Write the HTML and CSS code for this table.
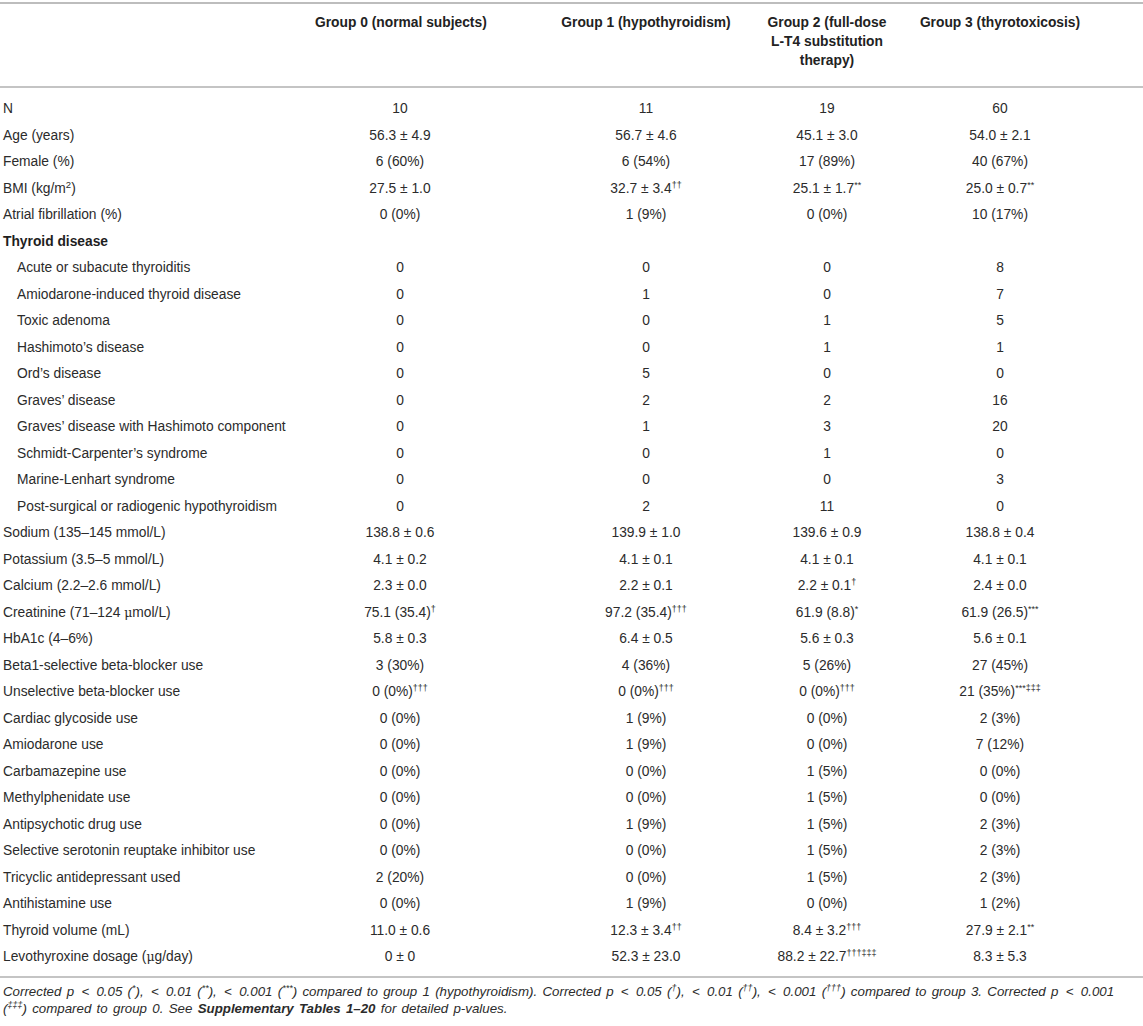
FILE: index.html
```html
<!DOCTYPE html>
<html>
<head>
<meta charset="utf-8">
<link rel="stylesheet" href="styles.css">
</head>
<body>
<div class="wrap">
<table class="tbl">
<colgroup>
<col class="c0"><col class="c1"><col class="c2"><col class="c3"><col class="c4">
</colgroup>
<thead>
<tr>
<th class="lab"></th>
<th class="g0"><span class="hd">Group 0 (normal subjects)</span></th>
<th class="g1"><span class="hd">Group 1 (hypothyroidism)</span></th>
<th class="g2"><span class="hd hd-narrow">Group 2 (full-dose L-T4 substitution therapy)</span></th>
<th class="g3"><span class="hd">Group 3 (thyrotoxicosis)</span></th>
</tr>
</thead>
<tbody>
<tr class="first"><td class="lab">N</td><td class="g0">10</td><td class="g1">11</td><td class="g2">19</td><td class="g3">60</td></tr>
<tr><td class="lab">Age (years)</td><td class="g0">56.3 ± 4.9</td><td class="g1">56.7 ± 4.6</td><td class="g2">45.1 ± 3.0</td><td class="g3">54.0 ± 2.1</td></tr>
<tr><td class="lab">Female (%)</td><td class="g0">6 (60%)</td><td class="g1">6 (54%)</td><td class="g2">17 (89%)</td><td class="g3">40 (67%)</td></tr>
<tr><td class="lab">BMI (kg/m<sup class="sq">2</sup>)</td><td class="g0">27.5 ± 1.0</td><td class="g1">32.7 ± 3.4<sup>††</sup></td><td class="g2">25.1 ± 1.7<sup>**</sup></td><td class="g3">25.0 ± 0.7<sup>**</sup></td></tr>
<tr><td class="lab">Atrial fibrillation (%)</td><td class="g0">0 (0%)</td><td class="g1">1 (9%)</td><td class="g2">0 (0%)</td><td class="g3">10 (17%)</td></tr>
<tr><td class="lab sect">Thyroid disease</td><td class="g0"></td><td class="g1"></td><td class="g2"></td><td class="g3"></td></tr>
<tr><td class="lab sub">Acute or subacute thyroiditis</td><td class="g0">0</td><td class="g1">0</td><td class="g2">0</td><td class="g3">8</td></tr>
<tr><td class="lab sub">Amiodarone-induced thyroid disease</td><td class="g0">0</td><td class="g1">1</td><td class="g2">0</td><td class="g3">7</td></tr>
<tr><td class="lab sub">Toxic adenoma</td><td class="g0">0</td><td class="g1">0</td><td class="g2">1</td><td class="g3">5</td></tr>
<tr><td class="lab sub">Hashimoto’s disease</td><td class="g0">0</td><td class="g1">0</td><td class="g2">1</td><td class="g3">1</td></tr>
<tr><td class="lab sub">Ord’s disease</td><td class="g0">0</td><td class="g1">5</td><td class="g2">0</td><td class="g3">0</td></tr>
<tr><td class="lab sub">Graves’ disease</td><td class="g0">0</td><td class="g1">2</td><td class="g2">2</td><td class="g3">16</td></tr>
<tr><td class="lab sub">Graves’ disease with Hashimoto component</td><td class="g0">0</td><td class="g1">1</td><td class="g2">3</td><td class="g3">20</td></tr>
<tr><td class="lab sub">Schmidt-Carpenter’s syndrome</td><td class="g0">0</td><td class="g1">0</td><td class="g2">1</td><td class="g3">0</td></tr>
<tr><td class="lab sub">Marine-Lenhart syndrome</td><td class="g0">0</td><td class="g1">0</td><td class="g2">0</td><td class="g3">3</td></tr>
<tr><td class="lab sub">Post-surgical or radiogenic hypothyroidism</td><td class="g0">0</td><td class="g1">2</td><td class="g2">11</td><td class="g3">0</td></tr>
<tr><td class="lab">Sodium (135–145 mmol/L)</td><td class="g0">138.8 ± 0.6</td><td class="g1">139.9 ± 1.0</td><td class="g2">139.6 ± 0.9</td><td class="g3">138.8 ± 0.4</td></tr>
<tr><td class="lab">Potassium (3.5–5 mmol/L)</td><td class="g0">4.1 ± 0.2</td><td class="g1">4.1 ± 0.1</td><td class="g2">4.1 ± 0.1</td><td class="g3">4.1 ± 0.1</td></tr>
<tr><td class="lab">Calcium (2.2–2.6 mmol/L)</td><td class="g0">2.3 ± 0.0</td><td class="g1">2.2 ± 0.1</td><td class="g2">2.2 ± 0.1<sup>†</sup></td><td class="g3">2.4 ± 0.0</td></tr>
<tr><td class="lab">Creatinine (71–124 <span class="mu">μ</span>mol/L)</td><td class="g0">75.1 (35.4)<sup>†</sup></td><td class="g1">97.2 (35.4)<sup>†††</sup></td><td class="g2">61.9 (8.8)<sup>*</sup></td><td class="g3">61.9 (26.5)<sup>***</sup></td></tr>
<tr><td class="lab">HbA1c (4–6%)</td><td class="g0">5.8 ± 0.3</td><td class="g1">6.4 ± 0.5</td><td class="g2">5.6 ± 0.3</td><td class="g3">5.6 ± 0.1</td></tr>
<tr><td class="lab">Beta1-selective beta-blocker use</td><td class="g0">3 (30%)</td><td class="g1">4 (36%)</td><td class="g2">5 (26%)</td><td class="g3">27 (45%)</td></tr>
<tr><td class="lab">Unselective beta-blocker use</td><td class="g0">0 (0%)<sup>†††</sup></td><td class="g1">0 (0%)<sup>†††</sup></td><td class="g2">0 (0%)<sup>†††</sup></td><td class="g3">21 (35%)<sup>***‡‡‡</sup></td></tr>
<tr><td class="lab">Cardiac glycoside use</td><td class="g0">0 (0%)</td><td class="g1">1 (9%)</td><td class="g2">0 (0%)</td><td class="g3">2 (3%)</td></tr>
<tr><td class="lab">Amiodarone use</td><td class="g0">0 (0%)</td><td class="g1">1 (9%)</td><td class="g2">0 (0%)</td><td class="g3">7 (12%)</td></tr>
<tr><td class="lab">Carbamazepine use</td><td class="g0">0 (0%)</td><td class="g1">0 (0%)</td><td class="g2">1 (5%)</td><td class="g3">0 (0%)</td></tr>
<tr><td class="lab">Methylphenidate use</td><td class="g0">0 (0%)</td><td class="g1">0 (0%)</td><td class="g2">1 (5%)</td><td class="g3">0 (0%)</td></tr>
<tr><td class="lab">Antipsychotic drug use</td><td class="g0">0 (0%)</td><td class="g1">1 (9%)</td><td class="g2">1 (5%)</td><td class="g3">2 (3%)</td></tr>
<tr><td class="lab">Selective serotonin reuptake inhibitor use</td><td class="g0">0 (0%)</td><td class="g1">0 (0%)</td><td class="g2">1 (5%)</td><td class="g3">2 (3%)</td></tr>
<tr><td class="lab">Tricyclic antidepressant used</td><td class="g0">2 (20%)</td><td class="g1">0 (0%)</td><td class="g2">1 (5%)</td><td class="g3">2 (3%)</td></tr>
<tr><td class="lab">Antihistamine use</td><td class="g0">0 (0%)</td><td class="g1">1 (9%)</td><td class="g2">0 (0%)</td><td class="g3">1 (2%)</td></tr>
<tr><td class="lab">Thyroid volume (mL)</td><td class="g0">11.0 ± 0.6</td><td class="g1">12.3 ± 3.4<sup>††</sup></td><td class="g2">8.4 ± 3.2<sup>†††</sup></td><td class="g3">27.9 ± 2.1<sup>**</sup></td></tr>
<tr class="last"><td class="lab">Levothyroxine dosage (<span class="mu">μ</span>g/day)</td><td class="g0">0 ± 0</td><td class="g1">52.3 ± 23.0</td><td class="g2">88.2 ± 22.7<sup>†††‡‡‡</sup></td><td class="g3">8.3 ± 5.3</td></tr>
</tbody>
</table>
<p class="note">Corrected p <span class="lt">&lt;</span> 0.05 (<sup>*</sup>), <span class="lt">&lt;</span> 0.01 (<sup>**</sup>), <span class="lt">&lt;</span> 0.001 (<sup>***</sup>) compared to group 1 (hypothyroidism). Corrected p <span class="lt">&lt;</span> 0.05 (<sup>†</sup>), <span class="lt">&lt;</span> 0.01 (<sup>††</sup>), <span class="lt">&lt;</span> 0.001 (<sup>†††</sup>) compared to group 3. Corrected p <span class="lt">&lt;</span> 0.001<br>(<sup>‡‡‡</sup>) compared to group 0. See <b>Supplementary Tables 1–20</b> for detailed p-values.</p>
</div>
</body>
</html>
```
FILE: styles.css
```css
html, body {
  margin: 0;
  padding: 0;
  background: #ffffff;
}
body {
  font-family: "Liberation Sans", Arial, Helvetica, sans-serif;
  font-size: 13.8px;
  color: #2b2b2b;
}
.wrap {
  padding-top: 2px;
}
.tbl {
  width: 1143px;
  border-collapse: collapse;
  table-layout: fixed;
}
.c0 { width: 315px; }
.c1 { width: 170px; }
.c2 { width: 246px; }
.c3 { width: 181px; }
.c4 { width: 231px; }

.tbl thead th {
  border-top: 2px solid #bdbdbd;
  border-bottom: 2px solid #c4c4c4;
  font-weight: bold;
  line-height: 19px;
  padding: 9px 0 16px 0;
  vertical-align: top;
  text-align: center;
  color: #222;
}
.hd { display: inline-block; white-space: nowrap; }
.hd-narrow { width: 130px; white-space: normal; }

.tbl td {
  line-height: 16.5px;
  padding: 5px 0;
  text-align: center;
  white-space: nowrap;
}
.tbl tr.first td { padding-top: 13px; }
.tbl tr.last td { padding-bottom: 10px; border-bottom: 2px solid #c4c4c4; }

.tbl .lab { text-align: left; padding-left: 3px; }
.tbl .sub { padding-left: 17px; }
.tbl .sect { font-weight: bold; color: #1e1e1e; }

.g0 { padding-left: 0; padding-right: 0; }
.tbl .g1 { padding-left: 76px; }
.tbl .g2 { padding-left: 11px; }
.tbl .g3 { padding-left: 3px; padding-right: 58px; }

sup {
  font-size: 9px;
  line-height: 0;
  vertical-align: 0;
  position: relative;
  top: -5px;
}
sup.sq { font-size: 9.5px; }
.mu { font-family: "DejaVu Serif", "Liberation Serif", serif; font-size: 12.5px; }

.note {
  margin: 0;
  padding: 5px 0 0 3px;
  font-size: 13.3px;
  font-style: italic;
  line-height: 17px;
  word-spacing: 1.6px;
  color: #2b2b2b;
}
.note .lt { padding: 0 2px; }
.note b { font-weight: bold; }
```
